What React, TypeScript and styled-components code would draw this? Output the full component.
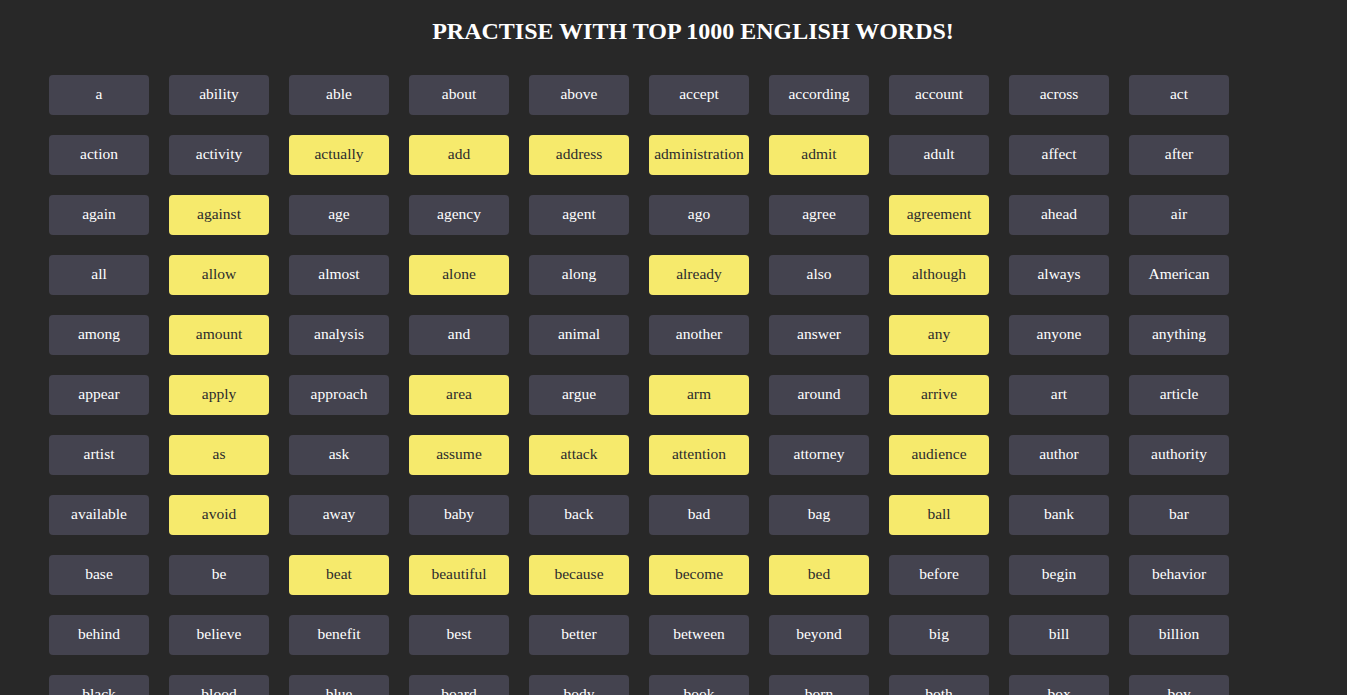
import React from "react";
import styled, { createGlobalStyle } from "styled-components";

const GlobalStyle = createGlobalStyle`
  html, body {
    margin: 0;
    padding: 0;
    background: #282828;
  }
  body {
    font-family: "Liberation Serif", "Times New Roman", serif;
    color: #ffffff;
  }
`;

const Page = styled.main`
  padding: 8px 10px 8px 49px;
`;

const Title = styled.h1`
  margin: 9px 0 30px;
  font-size: 24px;
  font-weight: bold;
  text-align: center;
  color: #ffffff;
  line-height: 28px;
`;

const Grid = styled.div`
  display: grid;
  grid-template-columns: repeat(10, 100px);
  gap: 20px;
`;

const WordButton = styled.button<{ $known: boolean }>`
  width: 100px;
  height: 40px;
  border: none;
  border-radius: 4px;
  padding: 0 0 2px;
  font-family: "Liberation Serif", "Times New Roman", serif;
  font-size: 15.5px;
  background: ${(p) => (p.$known ? "#f6ea6c" : "#44434f")};
  color: ${(p) => (p.$known ? "#2c2c2c" : "#ffffff")};
  cursor: pointer;
  white-space: nowrap;
`;

const words = `a ability able about above accept according account across act
action activity actually add address administration admit adult affect after
again against age agency agent ago agree agreement ahead air
all allow almost alone along already also although always American
among amount analysis and animal another answer any anyone anything
appear apply approach area argue arm around arrive art article
artist as ask assume attack attention attorney audience author authority
available avoid away baby back bad bag ball bank bar
base be beat beautiful because become bed before begin behavior
behind believe benefit best better between beyond big bill billion
black blood blue board body book born both box boy
break bring brother budget build building business but buy by`
  .split(/\s+/)
  .filter(Boolean);

const known = new Set([
  "actually", "add", "address", "administration", "admit",
  "against", "agreement",
  "allow", "alone", "already", "although",
  "amount", "any",
  "apply", "area", "arm", "arrive",
  "as", "assume", "attack", "attention", "audience",
  "avoid", "ball",
  "beat", "beautiful", "because", "become", "bed",
]);

export default function App() {
  return (
    <>
      <GlobalStyle />
      <Page>
        <Title>PRACTISE WITH TOP 1000 ENGLISH WORDS!</Title>
        <Grid>
          {words.map((w, i) => (
            <WordButton key={i} $known={known.has(w)}>
              {w}
            </WordButton>
          ))}
        </Grid>
      </Page>
    </>
  );
}
